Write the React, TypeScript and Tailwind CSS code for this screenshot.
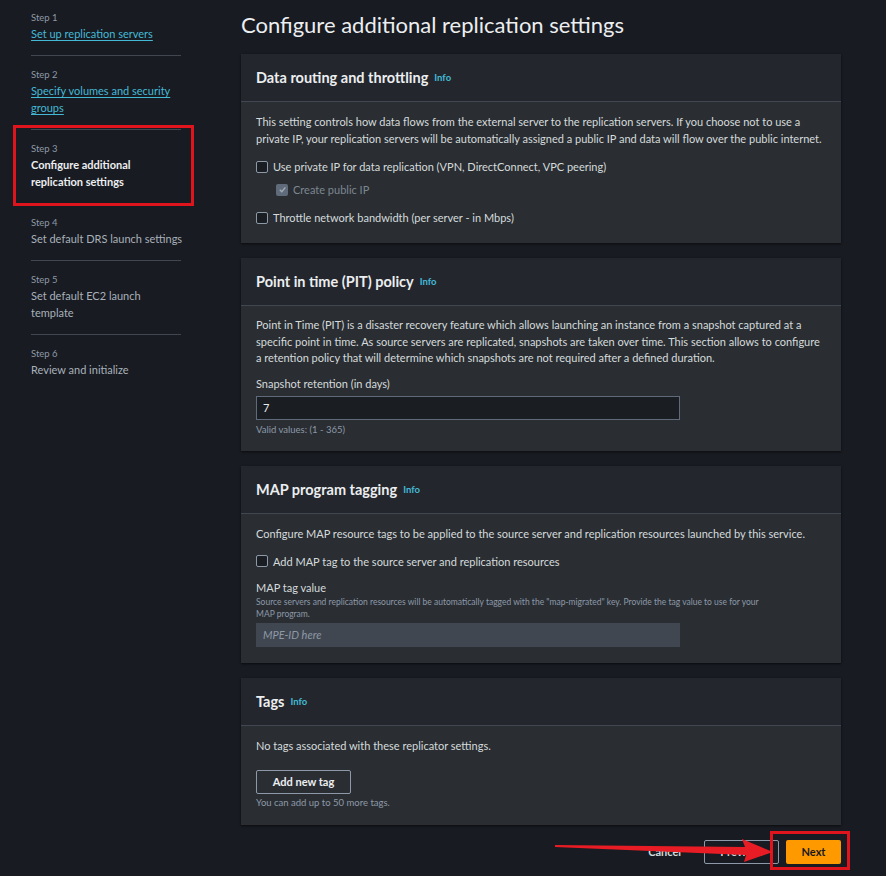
import React from 'react';

const font = { fontFamily: 'Lato, "Open Sans", sans-serif' };

function Info() {
  return <span className="ml-[6px] text-[9.5px] font-bold text-[#44b9d6]">Info</span>;
}

function Checkbox({ checked, disabled }: { checked?: boolean; disabled?: boolean }) {
  if (checked && disabled) {
    return (
      <span className="w-[12px] h-[12px] rounded-[2px] bg-[#5f6b7a] flex items-center justify-center shrink-0">
        <svg width="9" height="9" viewBox="0 0 10 10" fill="none">
          <path d="M2 5.2 4.2 7.4 8.2 2.6" stroke="#a3abb5" strokeWidth="1.6" />
        </svg>
      </span>
    );
  }
  return <span className="w-[12px] h-[12px] rounded-[2px] border border-[#8d99a8] bg-[#1a1d22] shrink-0" />;
}

function Card({ title, children }: { title: string; children: React.ReactNode }) {
  return (
    <section className="bg-[#2a2e33] shadow-[0_1px_2px_rgba(0,0,0,0.6)]">
      <header className="h-[48px] px-[15px] flex items-center bg-[#23272d] border-b border-[#414750]">
        <h2 className="text-[14.5px] font-bold text-[#eceef0]">{title}</h2>
        <Info />
      </header>
      <div className="px-[15px]">{children}</div>
    </section>
  );
}

const steps = [
  { n: 1, label: 'Set up replication servers', state: 'link' },
  { n: 2, label: 'Specify volumes and security groups', state: 'link' },
  { n: 3, label: 'Configure additional replication settings', state: 'active' },
  { n: 4, label: 'Set default DRS launch settings', state: 'todo' },
  { n: 5, label: 'Set default EC2 launch template', state: 'todo' },
  { n: 6, label: 'Review and initialize', state: 'todo' },
];

export default function App() {
  return (
    <div style={font} className="relative w-[886px] h-[876px] overflow-hidden bg-[#181b21] flex text-[11px] leading-[17px] text-[#d5dbdb]">
      {/* steps */}
      <nav className="w-[241px] shrink-0 pl-[31px]">
        <ol className="w-[150px]">
          {steps.map((s, i) => (
            <li
              key={s.n}
              className={`${i === 0 ? 'pt-[11px]' : 'pt-[12px]'} pb-[13px] ${i < steps.length - 1 ? 'border-b border-[#414750]' : ''}`}
            >
              <div className="text-[9.5px] leading-[14px] text-[#8d99a8]">Step {s.n}</div>
              {s.state === 'link' && (
                <a className="text-[#44b9d6] underline underline-offset-2">{s.label}</a>
              )}
              {s.state === 'active' && <div className="w-[110px] font-bold text-[#eceef0]">{s.label}</div>}
              {s.state === 'todo' && (
                <div className={`text-[#a8b1bb] ${s.n === 5 ? 'w-[115px]' : 'whitespace-nowrap'}`}>{s.label}</div>
              )}
            </li>
          ))}
        </ol>
      </nav>

      {/* main */}
      <main className="flex-1 pr-[45px] pt-[11px]">
        <h1 className="text-[22px] leading-[28px] text-[#eceef0] mb-[15px]">Configure additional replication settings</h1>

        <div className="flex flex-col gap-[15px]">
          <Card title="Data routing and throttling">
            <p className="pt-[11px]">
              This setting controls how data flows from the external server to the replication servers. If you choose not to use a private IP, your replication servers will be automatically assigned a public IP and data will flow over the public internet.
            </p>
            <label className="mt-[11px] flex items-center gap-[5px]">
              <Checkbox />
              <span>Use private IP for data replication (VPN, DirectConnect, VPC peering)</span>
            </label>
            <label className="mt-[6px] ml-[20px] flex items-center gap-[5px] text-[#7d8690]">
              <Checkbox checked disabled />
              <span>Create public IP</span>
            </label>
            <label className="mt-[11px] pb-[17px] flex items-center gap-[5px]">
              <Checkbox />
              <span>Throttle network bandwidth (per server - in Mbps)</span>
            </label>
          </Card>

          <Card title="Point in time (PIT) policy">
            <p className="pt-[11px] leading-[16.5px]">
              Point in Time (PIT) is a disaster recovery feature which allows launching an instance from a snapshot captured at a specific point in time. As source servers are replicated, snapshots are taken over time. This section allows to configure a retention policy that will determine which snapshots are not required after a defined duration.
            </p>
            <div className="mt-[8px]">Snapshot retention (in days)</div>
            <div className="mt-[4px] w-[424px] h-[24px] border border-[#5f6b7a] bg-[#1a1d22] px-[6px] flex items-center text-[#e9ebed]">7</div>
            <div className="mt-[3px] pb-[14px] text-[9.5px] leading-[14px] text-[#8d99a8]">Valid values: (1 - 365)</div>
          </Card>

          <Card title="MAP program tagging">
            <p className="pt-[11px]">
              Configure MAP resource tags to be applied to the source server and replication resources launched by this service.
            </p>
            <label className="mt-[11px] flex items-center gap-[5px]">
              <Checkbox />
              <span>Add MAP tag to the source server and replication resources</span>
            </label>
            <div className="mt-[9px]">MAP tag value</div>
            <div className="w-[520px] text-[8.5px] leading-[12px] text-[#8d99a8]">
              Source servers and replication resources will be automatically tagged with the "map-migrated" key. Provide the tag value to use for your MAP program.
            </div>
            <div className="mt-[3px] mb-[16px] w-[424px] h-[24px] bg-[#414750] px-[7px] flex items-center italic text-[#8d99a8]">MPE-ID here</div>
          </Card>

          <Card title="Tags">
            <p className="pt-[11px]">No tags associated with these replicator settings.</p>
            <button className="mt-[16px] h-[24px] w-[95px] border border-[#8d99a8] rounded-[2px] font-bold text-[#eceef0]">Add new tag</button>
            <div className="mt-[2px] pb-[15px] text-[9.5px] leading-[14px] text-[#8d99a8]">You can add up to 50 more tags.</div>
          </Card>
        </div>

        <div className="mt-[15px] flex items-center justify-end gap-[7px]">
          <button className="px-[16px] h-[24px] font-bold text-[#d5dbdb]">Cancel</button>
          <button className="h-[24px] w-[75px] border border-[#8d99a8] rounded-[2px] font-bold text-[#d5dbdb]">Previous</button>
          <button className="h-[24px] w-[55px] rounded-[2px] bg-[#ff9900] font-bold text-[#16191f]">Next</button>
        </div>
      </main>

      {/* red annotations */}
      <div className="absolute left-[13px] top-[125px] w-[181px] h-[81px] border-[3px] border-[#e0141c]" />
      <div className="absolute left-[770px] top-[831px] w-[80px] h-[39px] border-[3px] border-[#e0141c]" />
      <svg className="absolute left-0 top-0 pointer-events-none" width="886" height="876">
        <polygon points="555,845 745,847 742,839 773,852 744,862 746,855 555,847" fill="#e81c24" />
      </svg>
    </div>
  );
}
